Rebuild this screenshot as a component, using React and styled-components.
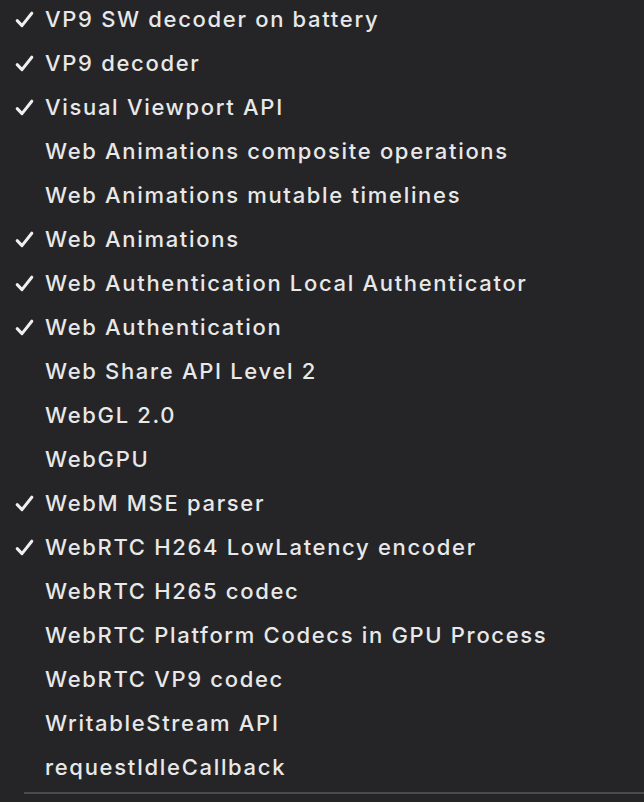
import React from "react";
import styled, { createGlobalStyle } from "styled-components";

const Global = createGlobalStyle`
  html, body { margin: 0; padding: 0; background: #252527; }
  body { font-family: Inter, "Noto Sans", "Liberation Sans", sans-serif; overflow: hidden; }
`;

const Menu = styled.div`
  width: 644px;
  height: 802px;
  background: #252527;
  overflow: hidden;
  display: flex;
  flex-direction: column;
  margin-top: -3px;
`;

const Row = styled.div`
  height: 44px;
  display: flex;
  align-items: center;
  flex-shrink: 0;
`;

const CheckCell = styled.div`
  width: 45px;
  display: flex;
  align-items: center;
  justify-content: flex-start;
  padding-left: 15px;
  box-sizing: border-box;
  flex-shrink: 0;
`;

const Label = styled.span`
  color: #e8e8e8;
  font-size: 22px;
  font-weight: 450;
  letter-spacing: 1.68px;
  white-space: nowrap;
`;

const Separator = styled.div`
  height: 2px;
  margin: 3px 0 0 24px;
  background: #4b4b4d;
  flex-shrink: 0;
`;

const Check = () => (
  <svg width="19" height="17" viewBox="0 0 19 17">
    <path d="M2.2 9.6 L7 14.6 L16.8 2.2" fill="none" stroke="#efefef" strokeWidth="3" strokeLinecap="round" strokeLinejoin="round" />
  </svg>
);

const items = [
  ["VP9 SW decoder on battery", true],
  ["VP9 decoder", true],
  ["Visual Viewport API", true],
  ["Web Animations composite operations", false],
  ["Web Animations mutable timelines", false],
  ["Web Animations", true],
  ["Web Authentication Local Authenticator", true],
  ["Web Authentication", true],
  ["Web Share API Level 2", false],
  ["WebGL 2.0", false],
  ["WebGPU", false],
  ["WebM MSE parser", true],
  ["WebRTC H264 LowLatency encoder", true],
  ["WebRTC H265 codec", false],
  ["WebRTC Platform Codecs in GPU Process", false],
  ["WebRTC VP9 codec", false],
  ["WritableStream API", false],
  ["requestIdleCallback", false],
];

export default function App() {
  return (
    <>
      <Global />
      <Menu>
        {items.map(([label, checked]) => (
          <Row key={label}>
            <CheckCell>{checked && <Check />}</CheckCell>
            <Label>{label}</Label>
          </Row>
        ))}
        <Separator />
      </Menu>
    </>
  );
}
